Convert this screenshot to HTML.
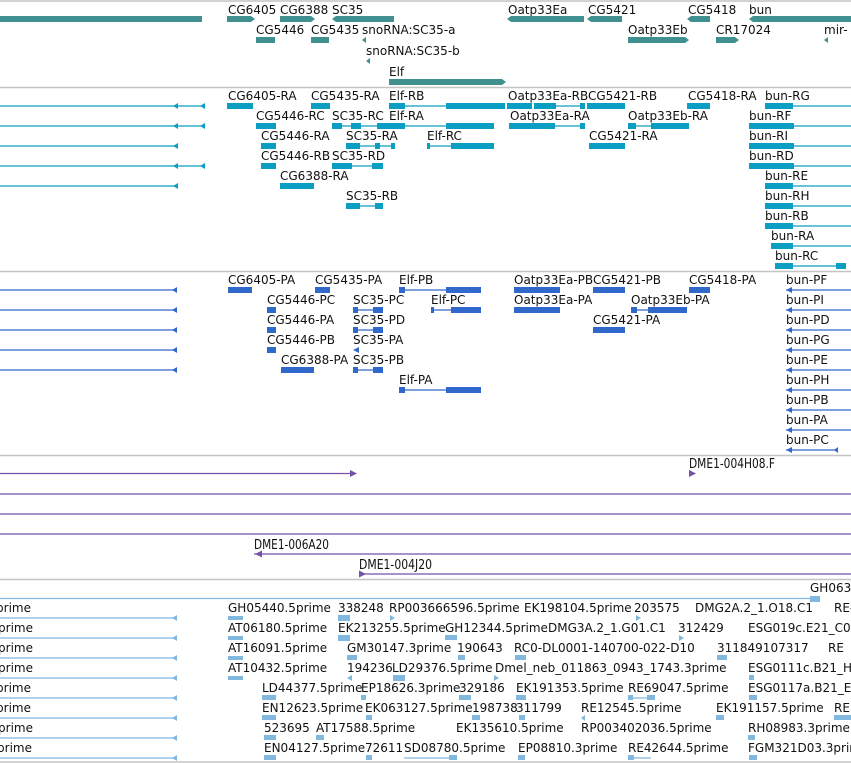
<!DOCTYPE html>
<html><head><meta charset="utf-8"><style>
html,body{margin:0;padding:0;background:#fff;width:851px;height:763px;overflow:hidden}
svg{display:block}
text{font-family:"DejaVu Sans","Liberation Sans",sans-serif;font-size:12px;fill:#111}
.sep{stroke:#c4c4c4;stroke-width:1.5}
.g rect,.g polygon{fill:#40908f}
.c line{stroke:#0a9ec2;stroke-width:1.3}.c rect,.c polygon{fill:#0a9ec2}
.b line{stroke:#3168cc;stroke-width:1.3}.b rect,.b polygon{fill:#3168cc}
.p line{stroke:#7452a8;stroke-width:1.3}.p rect,.p polygon{fill:#7452a8}
.l line{stroke:#80b8e0;stroke-width:1.3}.l rect,.l polygon{fill:#80b8e0}
.n text{font-size:13px}
</style></head><body>
<svg width="851" height="763" viewBox="0 0 851 763" xmlns="http://www.w3.org/2000/svg">
<line class="sep" x1="0" y1="1" x2="851" y2="1"/>
<line class="sep" x1="0" y1="87.5" x2="851" y2="87.5"/>
<line class="sep" x1="0" y1="271.5" x2="851" y2="271.5"/>
<line class="sep" x1="0" y1="455.5" x2="851" y2="455.5"/>
<line class="sep" x1="0" y1="579.5" x2="851" y2="579.5"/>
<line class="sep" x1="0" y1="762" x2="851" y2="762"/>

<g class="g">
<rect x="0" y="16" width="202" height="6"/>
<text x="228" y="14">CG6405</text><rect x="227" y="16" width="24" height="6"/><polygon points="251,16 255,19 251,22"/>
<text x="280" y="14">CG6388</text><rect x="280" y="16" width="31" height="6"/><polygon points="311,16 315,19 311,22"/>
<text x="332" y="14">SC35</text><rect x="336" y="16" width="58" height="6"/><polygon points="336,16 332,19 336,22"/>
<text x="508" y="14">Oatp33Ea</text><rect x="511" y="16" width="73" height="6"/><polygon points="511,16 507,19 511,22"/>
<text x="588" y="14">CG5421</text><rect x="591" y="16" width="31" height="6"/><polygon points="591,16 587,19 591,22"/>
<text x="688" y="14">CG5418</text><rect x="691" y="16" width="19" height="6"/><polygon points="691,16 687,19 691,22"/>
<text x="749" y="14">bun</text><rect x="753" y="16" width="98" height="6"/><polygon points="753,16 749,19 753,22"/>
<text x="256" y="34">CG5446</text><rect x="256" y="37" width="19" height="6"/>
<text x="311" y="34">CG5435</text><rect x="311" y="37" width="18" height="6"/>
<text x="362" y="34">snoRNA:SC35-a</text><polygon points="366,37 362,40 366,43"/>
<text x="628" y="34">Oatp33Eb</text><rect x="628" y="37" width="57" height="6"/><polygon points="685,37 689,40 685,43"/>
<text x="716" y="34">CR17024</text><rect x="716" y="37" width="19" height="6"/><polygon points="735,37 739,40 735,43"/>
<text x="824" y="34">mir-</text><polygon points="828,37 824,40 828,43"/>
<text x="366" y="55">snoRNA:SC35-b</text><polygon points="370,58 366,61 370,64"/>
<text x="389" y="76">Elf</text><rect x="389" y="79" width="113" height="6"/><polygon points="502,79 506,82 502,85"/>
</g>

<g class="c">
<line x1="0" y1="106" x2="204" y2="106"/><polygon points="178,103 173,106 178,109"/><polygon points="205,103 200,106 205,109"/>
<line x1="0" y1="126" x2="204" y2="126"/><polygon points="178,123 173,126 178,129"/><polygon points="205,123 200,126 205,129"/>
<line x1="0" y1="146" x2="176" y2="146"/><polygon points="178,143 173,146 178,149"/>
<line x1="0" y1="166" x2="204" y2="166"/><polygon points="178,163 173,166 178,169"/><polygon points="205,163 200,166 205,169"/>
<line x1="0" y1="186" x2="176" y2="186"/><polygon points="178,183 173,186 178,189"/>

<text x="228" y="100">CG6405-RA</text><rect x="227" y="103" width="26" height="6"/>
<text x="311" y="100">CG5435-RA</text><rect x="311" y="103" width="19" height="6"/>
<text x="389" y="100">Elf-RB</text><line x1="389" y1="106" x2="505" y2="106"/><rect x="389" y="103" width="16" height="6"/><rect x="446" y="103" width="59" height="6"/>
<text x="508" y="100">Oatp33Ea-RB</text><rect x="507" y="103" width="25" height="6"/><rect x="534" y="103" width="22" height="6"/><line x1="556" y1="106" x2="585" y2="106"/><rect x="580" y="103" width="5" height="6"/>
<text x="588" y="100">CG5421-RB</text><rect x="587" y="103" width="38" height="6"/>
<text x="688" y="100">CG5418-RA</text><rect x="687" y="103" width="23" height="6"/>
<text x="765" y="100">bun-RG</text><line x1="765" y1="106" x2="851" y2="106"/><rect x="765" y="103" width="28" height="6"/>

<text x="256" y="120">CG5446-RC</text><rect x="256" y="123" width="20" height="6"/>
<text x="332" y="120">SC35-RC</text><line x1="332" y1="126" x2="394" y2="126"/><rect x="332" y="123" width="10" height="6"/><rect x="351" y="123" width="10" height="6"/><rect x="377" y="123" width="17" height="6"/>
<text x="389" y="120">Elf-RA</text><line x1="389" y1="126" x2="494" y2="126"/><rect x="389" y="123" width="16" height="6"/><rect x="446" y="123" width="48" height="6"/>
<text x="510" y="120">Oatp33Ea-RA</text><rect x="509" y="123" width="46" height="6"/><line x1="555" y1="126" x2="585" y2="126"/><rect x="580" y="123" width="5" height="6"/>
<text x="628" y="120">Oatp33Eb-RA</text><rect x="628" y="123" width="8" height="6"/><line x1="628" y1="126" x2="689" y2="126"/><rect x="651" y="123" width="38" height="6"/>
<text x="749" y="120">bun-RF</text><line x1="749" y1="126" x2="851" y2="126"/><rect x="749" y="123" width="45" height="6"/>

<text x="261" y="140">CG5446-RA</text><rect x="261" y="143" width="15" height="6"/>
<text x="346" y="140">SC35-RA</text><line x1="346" y1="146" x2="395" y2="146"/><rect x="346" y="143" width="14" height="6"/><rect x="375" y="143" width="5" height="6"/><rect x="391" y="143" width="4" height="6"/>
<text x="427" y="140">Elf-RC</text><line x1="427" y1="146" x2="494" y2="146"/><rect x="427" y="143" width="3" height="6"/><rect x="451" y="143" width="43" height="6"/>
<text x="589" y="140">CG5421-RA</text><rect x="589" y="143" width="36" height="6"/>
<text x="749" y="140">bun-RI</text><line x1="749" y1="146" x2="851" y2="146"/><rect x="749" y="143" width="45" height="6"/>

<text x="261" y="160">CG5446-RB</text><rect x="261" y="163" width="15" height="6"/>
<text x="332" y="160">SC35-RD</text><line x1="332" y1="166" x2="383" y2="166"/><rect x="332" y="163" width="20" height="6"/><rect x="372" y="163" width="11" height="6"/>
<text x="749" y="160">bun-RD</text><line x1="749" y1="166" x2="851" y2="166"/><rect x="749" y="163" width="45" height="6"/>

<text x="280" y="180">CG6388-RA</text><rect x="280" y="183" width="34" height="6"/>
<text x="765" y="180">bun-RE</text><line x1="765" y1="186" x2="851" y2="186"/><rect x="765" y="183" width="28" height="6"/>
<text x="346" y="200">SC35-RB</text><line x1="346" y1="206" x2="383" y2="206"/><rect x="346" y="203" width="14" height="6"/><rect x="375" y="203" width="8" height="6"/>
<text x="765" y="200">bun-RH</text><line x1="765" y1="206" x2="851" y2="206"/><rect x="765" y="203" width="28" height="6"/>
<text x="765" y="220">bun-RB</text><line x1="765" y1="226" x2="851" y2="226"/><rect x="765" y="223" width="28" height="6"/>
<text x="771" y="240">bun-RA</text><line x1="771" y1="246" x2="851" y2="246"/><rect x="771" y="243" width="22" height="6"/>
<text x="775" y="260">bun-RC</text><line x1="775" y1="266" x2="846" y2="266"/><rect x="775" y="263" width="18" height="6"/><rect x="836" y="263" width="10" height="6"/>
</g>

<g class="b">
<line x1="0" y1="290" x2="176" y2="290"/><polygon points="177,287 172,290 177,293"/>
<line x1="0" y1="310" x2="176" y2="310"/><polygon points="177,307 172,310 177,313"/>
<line x1="0" y1="330" x2="176" y2="330"/><polygon points="177,327 172,330 177,333"/>
<line x1="0" y1="350" x2="176" y2="350"/><polygon points="177,347 172,350 177,353"/>
<line x1="0" y1="370" x2="176" y2="370"/><polygon points="177,367 172,370 177,373"/>
<text x="228" y="284">CG6405-PA</text><rect x="228" y="287" width="24" height="6"/>
<text x="315" y="284">CG5435-PA</text><rect x="315" y="287" width="15" height="6"/>
<text x="399" y="284">Elf-PB</text><line x1="399" y1="290" x2="481" y2="290"/><rect x="399" y="287" width="6" height="6"/><rect x="446" y="287" width="35" height="6"/>
<text x="514" y="284">Oatp33Ea-PB</text><rect x="514" y="287" width="46" height="6"/>
<text x="593" y="284">CG5421-PB</text><rect x="593" y="287" width="32" height="6"/>
<text x="689" y="284">CG5418-PA</text><rect x="689" y="287" width="21" height="6"/>
<text x="786" y="284">bun-PF</text><line x1="786" y1="290" x2="851" y2="290"/><polygon points="792,287 786,290 792,293"/>

<text x="267" y="304">CG5446-PC</text><rect x="267" y="307" width="9" height="6"/>
<text x="353" y="304">SC35-PC</text><line x1="353" y1="310" x2="383" y2="310"/><rect x="353" y="307" width="5" height="6"/><rect x="373" y="307" width="10" height="6"/>
<text x="431" y="304">Elf-PC</text><line x1="431" y1="310" x2="481" y2="310"/><rect x="431" y="307" width="3" height="6"/><rect x="451" y="307" width="30" height="6"/>
<text x="514" y="304">Oatp33Ea-PA</text><rect x="514" y="307" width="46" height="6"/>
<text x="631" y="304">Oatp33Eb-PA</text><line x1="631" y1="310" x2="687" y2="310"/><rect x="631" y="307" width="6" height="6"/><rect x="648" y="307" width="39" height="6"/>
<text x="786" y="304">bun-PI</text><line x1="786" y1="310" x2="851" y2="310"/><polygon points="792,307 786,310 792,313"/>

<text x="267" y="324">CG5446-PA</text><rect x="267" y="327" width="9" height="6"/>
<text x="353" y="324">SC35-PD</text><line x1="353" y1="330" x2="383" y2="330"/><rect x="353" y="327" width="5" height="6"/><rect x="373" y="327" width="10" height="6"/>
<text x="593" y="324">CG5421-PA</text><rect x="593" y="327" width="32" height="6"/>
<text x="786" y="324">bun-PD</text><line x1="786" y1="330" x2="851" y2="330"/><polygon points="792,327 786,330 792,333"/>

<text x="267" y="344">CG5446-PB</text><rect x="267" y="347" width="9" height="6"/>
<text x="353" y="344">SC35-PA</text><polygon points="359,347 353,350 359,353"/>
<text x="786" y="344">bun-PG</text><line x1="786" y1="350" x2="851" y2="350"/><polygon points="792,347 786,350 792,353"/>

<text x="281" y="364">CG6388-PA</text><rect x="281" y="367" width="33" height="6"/>
<text x="353" y="364">SC35-PB</text><line x1="353" y1="370" x2="383" y2="370"/><rect x="353" y="367" width="5" height="6"/><rect x="373" y="367" width="10" height="6"/>
<text x="786" y="364">bun-PE</text><line x1="786" y1="370" x2="851" y2="370"/><polygon points="792,367 786,370 792,373"/>

<text x="399" y="384">Elf-PA</text><line x1="399" y1="390" x2="481" y2="390"/><rect x="399" y="387" width="6" height="6"/><rect x="446" y="387" width="35" height="6"/>
<text x="786" y="384">bun-PH</text><line x1="786" y1="390" x2="851" y2="390"/><polygon points="792,387 786,390 792,393"/>
<text x="786" y="404">bun-PB</text><line x1="786" y1="410" x2="851" y2="410"/><polygon points="792,407 786,410 792,413"/>
<text x="786" y="424">bun-PA</text><line x1="786" y1="430" x2="851" y2="430"/><polygon points="792,427 786,430 792,433"/>
<text x="786" y="444">bun-PC</text><line x1="786" y1="450" x2="838" y2="450"/><polygon points="792,447 786,450 792,453"/><polygon points="838,447 838,453 834,450"/>
</g>

<g class="p n">
<line x1="0" y1="473.5" x2="352" y2="473.5"/><polygon points="350,470 357,473.5 350,477"/>
<text x="689" y="468" textLength="86" lengthAdjust="spacingAndGlyphs">DME1-004H08.F</text><polygon points="689,470 696,473.5 689,477"/>
<line x1="0" y1="494" x2="851" y2="494"/>
<line x1="0" y1="514" x2="851" y2="514"/>
<line x1="0" y1="534" x2="851" y2="534"/>
<text x="254" y="549" textLength="75" lengthAdjust="spacingAndGlyphs">DME1-006A20</text><line x1="254" y1="554" x2="851" y2="554"/><polygon points="262,550.5 255,554 262,557.5"/>
<text x="359" y="569" textLength="73" lengthAdjust="spacingAndGlyphs">DME1-004J20</text><line x1="359" y1="574" x2="851" y2="574"/><polygon points="359,570.5 366,574 359,577.5"/>
</g>

<g class="l">
<line x1="0" y1="598.5" x2="818" y2="598.5"/><polygon points="815,595.5 820,598.5 815,601.5"/>
<text x="810" y="592">GH063</text><rect x="810" y="596" width="10" height="6"/>
<line x1="0" y1="618" x2="176" y2="618"/><polygon points="177,615 172,618 177,621"/>
<line x1="0" y1="638" x2="176" y2="638"/><polygon points="177,635 172,638 177,641"/>
<line x1="0" y1="658" x2="176" y2="658"/><polygon points="177,655 172,658 177,661"/>
<line x1="0" y1="678" x2="176" y2="678"/><polygon points="177,675 172,678 177,681"/>
<line x1="0" y1="698" x2="176" y2="698"/><polygon points="177,695 172,698 177,701"/>
<line x1="0" y1="718" x2="176" y2="718"/><polygon points="177,715 172,718 177,721"/>
<line x1="0" y1="738" x2="176" y2="738"/><polygon points="177,735 172,738 177,741"/>
<line x1="0" y1="758" x2="176" y2="758"/><polygon points="177,755 172,758 177,761"/>
<text x="31" y="612" text-anchor="end">prime</text>
<text x="33" y="632" text-anchor="end">prime</text>
<text x="33" y="652" text-anchor="end">prime</text>
<text x="33" y="672" text-anchor="end">prime</text>
<text x="31" y="692" text-anchor="end">prime</text>
<text x="31" y="712" text-anchor="end">prime</text>
<text x="33" y="732" text-anchor="end">prime</text>
<text x="32" y="752" text-anchor="end">prime</text>

<text x="228" y="612">GH05440.5prime</text><rect x="228" y="616" width="15" height="4"/>
<text x="338" y="612">338248</text><rect x="338" y="615" width="12" height="6"/>
<text x="389" y="612">RP003666596.5prime</text><polygon points="390,615 395,618 390,621"/>
<text x="524" y="612">EK198104.5prime</text>
<text x="634" y="612">203575</text><polygon points="636,615 641,618 636,621"/>
<text x="695" y="612">DMG2A.2_1.O18.C1</text>
<text x="834" y="612">RE-</text>

<text x="228" y="632">AT06180.5prime</text><rect x="228" y="636" width="15" height="4"/>
<text x="338" y="632">EK213255.5prime</text><rect x="338" y="635" width="12" height="6"/>
<text x="445" y="632">GH12344.5prime</text><rect x="445" y="635" width="12" height="5"/>
<text x="548" y="632">DMG3A.2_1.G01.C1</text>
<text x="678" y="632">312429</text><polygon points="679,635 684,638 679,641"/>
<text x="748" y="632">ESG019c.E21_C0</text>

<text x="228" y="652">AT16091.5prime</text><rect x="228" y="656" width="15" height="4"/>
<text x="347" y="652">GM30147.3prime</text><rect x="347" y="655" width="10" height="5"/>
<text x="457" y="652">190643</text><rect x="458" y="655" width="7" height="5"/>
<text x="514" y="652">RC0-DL0001-140700-022-D10</text><rect x="515" y="655" width="11" height="5"/>
<text x="717" y="652">311849107317</text><rect x="717" y="655" width="10" height="5"/>
<text x="828" y="652">RE</text>

<text x="228" y="672">AT10432.5prime</text><rect x="228" y="676" width="15" height="4"/>
<text x="347" y="672">194236</text><polygon points="352,675 347,678 352,681"/>
<text x="392" y="672">LD29376.5prime</text><rect x="393" y="675" width="12" height="6"/>
<text x="495" y="672">Dmel_neb_011863_0943_1743.3prime</text><polygon points="494,675 499,678 494,681"/>
<text x="748" y="672">ESG0111c.B21_H</text><rect x="749" y="675" width="5" height="5"/>

<text x="262" y="692">LD44377.5prime</text><rect x="262" y="695" width="14" height="5"/>
<text x="361" y="692">EP18626.3prime</text><rect x="361" y="695" width="5" height="5"/>
<text x="459" y="692">329186</text><rect x="459" y="695" width="12" height="5"/>
<text x="516" y="692">EK191353.5prime</text><rect x="516" y="695" width="10" height="5"/>
<text x="628" y="692">RE69047.5prime</text><line x1="628" y1="698" x2="655" y2="698"/><rect x="628" y="695" width="5" height="5"/><rect x="647" y="695" width="8" height="5"/>
<text x="748" y="692">ESG0117a.B21_E</text><rect x="749" y="695" width="8" height="5"/>

<text x="262" y="712">EN12623.5prime</text><rect x="262" y="715" width="14" height="5"/>
<text x="365" y="712">EK063127.5prime</text><rect x="366" y="715" width="6" height="5"/>
<text x="472" y="712">198738</text><rect x="472" y="715" width="8" height="5"/>
<text x="516" y="712">311799</text><rect x="519" y="715" width="6" height="5"/>
<text x="581" y="712">RE12545.5prime</text><polygon points="585,715 581,718 585,721"/>
<text x="716" y="712">EK191157.5prime</text><rect x="716" y="715" width="8" height="5"/>
<text x="834" y="712">RE</text><rect x="834" y="715" width="17" height="5"/>

<text x="264" y="732">523695</text><rect x="264" y="735" width="12" height="5"/>
<text x="316" y="732">AT17588.5prime</text><rect x="316" y="735" width="8" height="5"/>
<text x="456" y="732">EK135610.5prime</text>
<text x="581" y="732">RP003402036.5prime</text>
<text x="748" y="732">RH08983.3prime</text><rect x="748" y="735" width="7" height="5"/>

<text x="264" y="752">EN04127.5prime</text><rect x="264" y="755" width="12" height="5"/>
<text x="365" y="752">72611</text><rect x="366" y="755" width="6" height="5"/>
<text x="404" y="752">SD08780.5prime</text><line x1="404" y1="758" x2="457" y2="758"/><rect x="449" y="755" width="8" height="5"/>
<text x="518" y="752">EP08810.3prime</text><rect x="518" y="755" width="7" height="5"/>
<text x="628" y="752">RE42644.5prime</text><line x1="628" y1="758" x2="651" y2="758"/><rect x="628" y="755" width="6" height="5"/>
<text x="748" y="752">FGM321D03.3prime</text><rect x="749" y="755" width="8" height="5"/>
</g>
</svg>
</body></html>
